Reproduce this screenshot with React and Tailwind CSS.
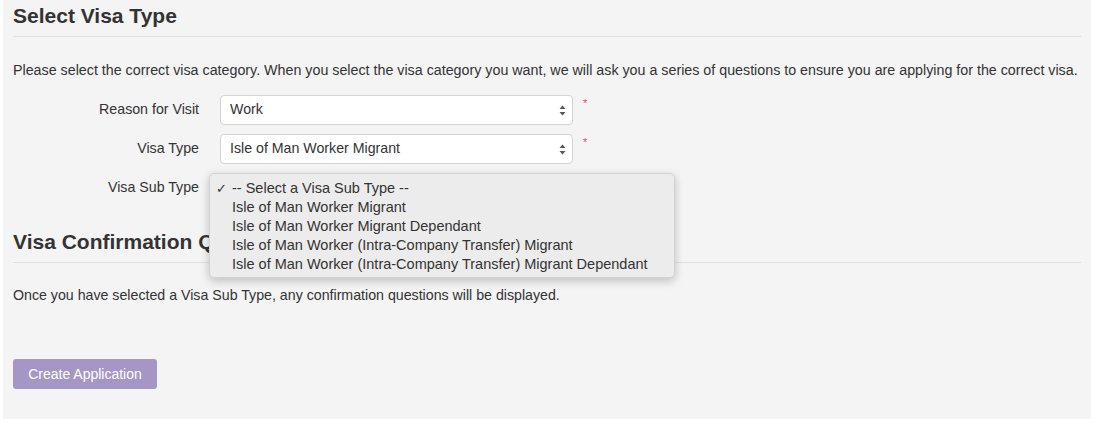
import { useState } from 'react'

function Arrows() {
  return (
    <svg width="7" height="11" viewBox="0 0 7 11" className="shrink-0">
      <path d="M3.5 0.5L6.5 4H0.5z" fill="#555" />
      <path d="M3.5 10.5L6.5 7H0.5z" fill="#555" />
    </svg>
  )
}

function SelectRow({ label, value, required }) {
  return (
    <div className="flex items-center h-[30px]">
      <label className="w-[186px] text-right text-[14.2px] text-[#333]">{label}</label>
      <div className="ml-[21px] w-[353px] h-[30px] bg-white border border-[#d4d4d4] rounded-[4px] flex items-center justify-between pl-[9px] pr-[6px] text-[14.2px] text-[#333]">
        <span>{value}</span>
        <Arrows />
      </div>
      {required && <span className="ml-[10px] -mt-[14px] text-[#d9534f] text-[11px] leading-none">*</span>}
    </div>
  )
}

const subTypes = [
  '-- Select a Visa Sub Type --',
  'Isle of Man Worker Migrant',
  'Isle of Man Worker Migrant Dependant',
  'Isle of Man Worker (Intra-Company Transfer) Migrant',
  'Isle of Man Worker (Intra-Company Transfer) Migrant Dependant',
]

export default function App() {
  const [selected] = useState(0)

  return (
    <div className="w-full h-[426px] bg-white" style={{ fontFamily: '"Liberation Sans", Arial, sans-serif' }}>
      <div className="ml-[3px] w-[1088px] h-[419px] bg-[#f4f4f4] px-[10px]">

        {/* Select Visa Type */}
        <h2 className="pt-[3px] text-[21px] font-bold text-[#333] leading-[26px]">Select Visa Type</h2>
        <hr className="mt-[7px] border-t border-[#e0e0e0]" />
        <p className="mt-[25px] text-[14.28px] text-[#333] leading-[16px] whitespace-nowrap">
          Please select the correct visa category. When you select the visa category you want, we will ask you a series of questions to ensure you are applying for the correct visa.
        </p>

        <div className="mt-[17px] flex flex-col gap-[9px]">
          <SelectRow label="Reason for Visit" value="Work" required />
          <SelectRow label="Visa Type" value="Isle of Man Worker Migrant" required />

          {/* Visa Sub Type (open) */}
          <div className="relative flex items-center h-[30px]">
            <label className="w-[186px] text-right text-[14.2px] text-[#333]">Visa Sub Type</label>
            <div className="ml-[21px] w-[353px] h-[30px] bg-white border-2 border-[#6fa6dc] rounded-[4px]" />
            <div className="absolute left-[196px] top-0 w-[466px] bg-[#ececec] rounded-[5px] border border-[#d2d2d2] shadow-[0_3px_10px_rgba(0,0,0,0.22)] pt-[5px] pb-[3px] z-10">
              {subTypes.map((t, i) => (
                <div key={t} className="flex items-center h-[19px] text-[14.5px] text-[#333]">
                  <span className="w-[22px] pl-[6px] text-[13px]">{i === selected ? '✓' : ''}</span>
                  <span>{t}</span>
                </div>
              ))}
            </div>
          </div>
        </div>

        {/* Visa Confirmation Questions */}
        <h2 className="mt-[26px] text-[21px] font-bold text-[#333] leading-[26px]">Visa Confirmation Questions</h2>
        <hr className="mt-[7px] border-t border-[#e0e0e0]" />
        <p className="mt-[24px] text-[14.2px] text-[#333] leading-[16px]">
          Once you have selected a Visa Sub Type, any confirmation questions will be displayed.
        </p>

        <button className="mt-[56px] w-[144px] h-[30px] rounded-[3px] bg-[#a596c6] text-white text-[14px]">
          Create Application
        </button>
      </div>
    </div>
  )
}
